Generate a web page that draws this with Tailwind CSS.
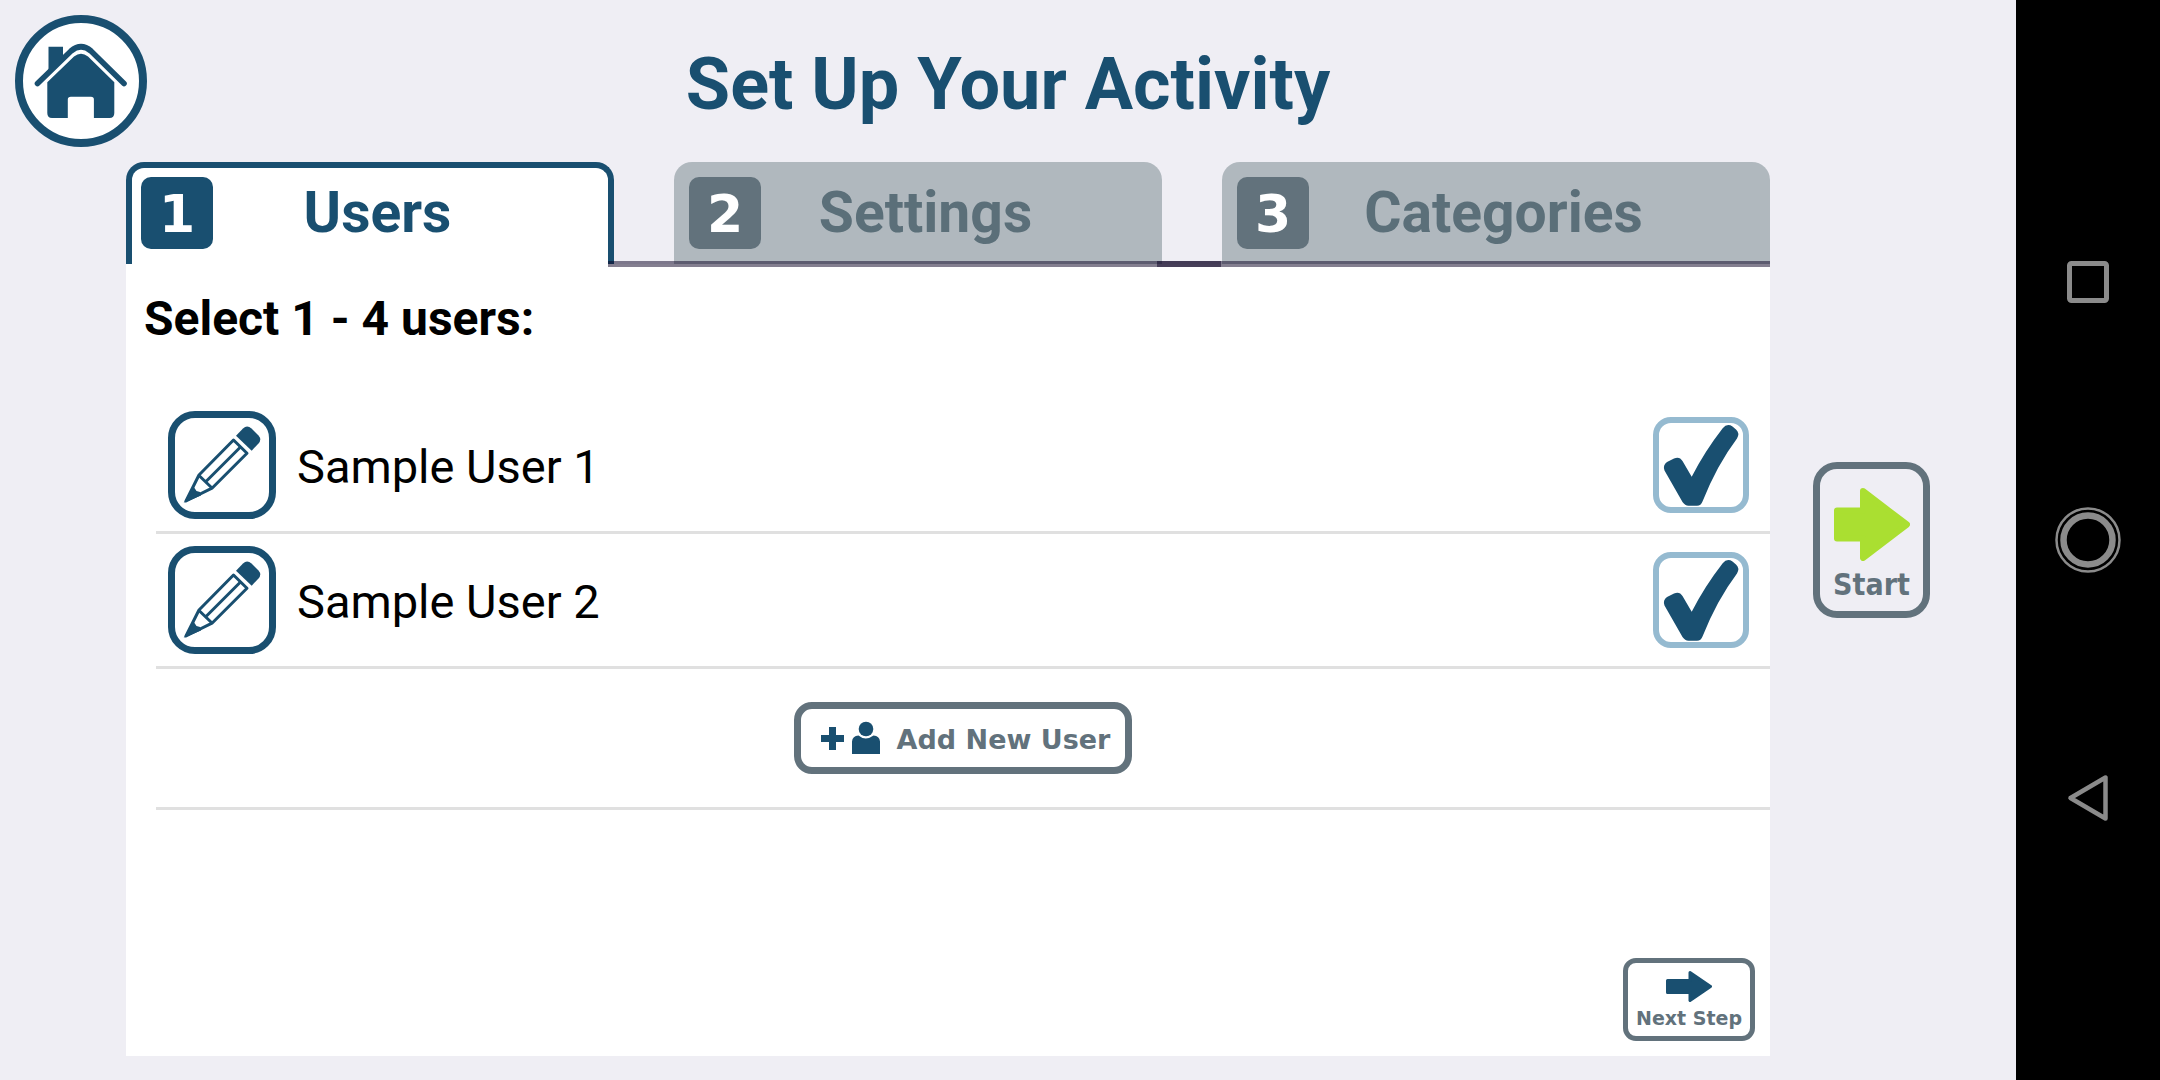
<!DOCTYPE html>
<html lang="en">
<head>
<meta charset="utf-8">
<meta name="viewport" content="width=device-width, initial-scale=1">
<title>Set Up Your Activity</title>
<script src="https://cdn.jsdelivr.net/npm/@tailwindcss/browser@4"></script>
</head>
<body class="flex min-h-screen bg-[#efeef4] font-[Roboto,sans-serif] text-black">

<svg class="hidden" aria-hidden="true">
  <symbol id="pencil" viewBox="0 0 108 108">
    <path fill="#194f70" d="M68 24.7l7-7.3q4-4 8.500 0l7 7q3.500 4 0 8l-6.800 7.300z"/>
    <path fill="none" stroke="#194f70" stroke-width="3" stroke-linejoin="round" d="M65.500 29L79 42.300L44 77.200L18 90L31 64z"/>
    <path fill="none" stroke="#194f70" stroke-width="3" d="M31 64.500L44.500 77.500M72.500 36L38 70.500"/>
    <path fill="#194f70" d="M15.700 91.700L25.500 75.500L28.500 80L32 81l1 3.500z"/>
  </symbol>
  <symbol id="check" viewBox="0 0 96 96">
    <path fill="#194f70" d="M11.500 53.500Q9.500 48 14 45L21 41.500Q26.500 39 29.500 44L38.700 59.700Q52 34 69.700 11.300Q74 6 79.500 9.500L83 12.500Q87 16 84 21.500Q64 48 49.500 84.500Q48 88.700 44 88.700H35.500Q32 88.700 29.500 85z"/>
  </symbol>
  <symbol id="arrow" viewBox="0 0 76 73">
    <path fill="currentColor" stroke="currentColor" stroke-width="6" stroke-linejoin="round" d="M3 22.500H29V3L73 36.500L29 70V50.500H3z"/>
  </symbol>
</svg>

<main class="flex flex-1 flex-col">
  <header class="grid grid-cols-[132px_1fr_132px] items-start px-[15px] pt-[15px]">
    <button aria-label="Home" class="size-[132px]">
      <svg viewBox="0 0 132 132" class="size-full">
        <circle cx="66" cy="66" r="62" fill="#fff" stroke="#194f70" stroke-width="8"/>
        <path fill="#194f70" d="M33.500 31.700H48V43L33.500 57z"/>
        <path fill="none" stroke="#194f70" stroke-width="5.600" stroke-linecap="round" d="M22.500 68.500L56 36Q66 27.500 76 36L109 68.500"/>
        <path fill="#194f70" d="M32.300 67.300L59 41.500Q66 36 73 41.500L99.300 67.300V98Q99.300 103 94.500 103H78.900V84.500Q78.900 81.700 76 81.700H55.800Q52.800 81.700 52.800 84.500V103H37Q32.300 103 32.300 98z"/>
      </svg>
    </button>
    <h1 class="pt-[26px] text-center text-[72px] leading-[88px] font-bold text-[#194f70]">Set Up Your Activity</h1>
  </header>

  <div class="flex flex-1 pt-[15px] pb-6 pl-[126px]">
    <section class="flex flex-1 flex-col">
      <div role="tablist" class="grid grid-cols-[488fr_488fr_548fr] gap-[60px]">
        <button role="tab" aria-selected="true" class="relative flex h-[102px] items-center rounded-t-[18px] border-6 border-b-0 border-[#194f70] bg-white pb-[6px] pl-[9px]">
          <span class="flex size-[72px] items-center justify-center rounded-[10px] bg-[#194f70] pt-[2px] font-['DejaVu_Sans'] text-[52px] leading-none font-bold text-white">1</span>
          <span class="flex-1 pr-[66px] text-center text-[57px] leading-[64px] font-bold text-[#194f70]">Users</span>
          <span class="absolute -bottom-[3px] left-full z-10 h-[6px] w-[calc(100%+137px)] bg-[#0a0022]/50"></span>
        </button>
        <button role="tab" aria-selected="false" class="relative flex h-[102px] items-center rounded-t-[18px] bg-[#b0b8be] pl-[15px]">
          <span class="flex size-[72px] items-center justify-center rounded-[10px] bg-[#62727c] pt-[2px] font-['DejaVu_Sans'] text-[52px] leading-none font-bold text-white">2</span>
          <span class="flex-1 pr-[72px] text-center text-[57px] leading-[64px] font-bold text-[#5b6f79]">Settings</span>
          <span class="absolute -bottom-[3px] left-[calc(100%-5px)] z-10 h-[6px] w-[calc(100%+125px)] bg-[#0a0022]/50"></span>
        </button>
        <button role="tab" aria-selected="false" class="flex h-[102px] items-center rounded-t-[18px] bg-[#b0b8be] pl-[15px]">
          <span class="flex size-[72px] items-center justify-center rounded-[10px] bg-[#62727c] pt-[2px] font-['DejaVu_Sans'] text-[52px] leading-none font-bold text-white">3</span>
          <span class="flex-1 pr-[72px] text-center text-[57px] leading-[64px] font-bold text-[#5b6f79]">Categories</span>
        </button>
      </div>

      <div role="tabpanel" class="flex flex-1 flex-col bg-white pb-[15px]">
        <h2 class="pt-[27px] pb-[52px] pl-[18px] text-[48px] leading-[56px] font-bold">Select 1 - 4 users:</h2>

        <ul class="pl-[30px]">
          <li class="flex h-[135px] items-center border-b-3 border-[#e0e0e0] pr-[21px] pl-3">
            <button aria-label="Edit Sample User 1" class="size-[108px] rounded-[27px] border-[7px] border-[#194f70]"><svg class="-m-[7px] size-[108px]"><use href="#pencil"/></svg></button>
            <label for="user1" class="flex-1 pt-1 pl-[21px] text-[47px] leading-[56px]">Sample User 1</label>
            <span class="relative size-24">
              <input id="user1" type="checkbox" checked class="block size-24 appearance-none rounded-[18px] border-6 border-[#95bad0] bg-white">
              <svg class="pointer-events-none absolute inset-0 size-24"><use href="#check"/></svg>
            </span>
          </li>
          <li class="flex h-[135px] items-center border-b-3 border-[#e0e0e0] pr-[21px] pl-3">
            <button aria-label="Edit Sample User 2" class="size-[108px] rounded-[27px] border-[7px] border-[#194f70]"><svg class="-m-[7px] size-[108px]"><use href="#pencil"/></svg></button>
            <label for="user2" class="flex-1 pt-1 pl-[21px] text-[47px] leading-[56px]">Sample User 2</label>
            <span class="relative size-24">
              <input id="user2" type="checkbox" checked class="block size-24 appearance-none rounded-[18px] border-6 border-[#95bad0] bg-white">
              <svg class="pointer-events-none absolute inset-0 size-24"><use href="#check"/></svg>
            </span>
          </li>
          <li class="flex h-[141px] items-center justify-center border-b-3 border-[#e0e0e0]">
            <button class="flex h-[72px] items-center rounded-[18px] border-[7px] border-[#62727c] pr-[15px] pl-5 font-['DejaVu_Sans'] text-[27px] leading-8 font-bold text-[#62727c]">
              <svg viewBox="0 0 60 34" class="mr-4 h-[34px] w-[60px]" fill="#194f70">
                <path d="M8 6h7v8h8v7h-8v8H8v-8H0v-7h8z"/>
                <circle cx="45" cy="8" r="7.300"/>
                <path d="M31 33V20.500Q31.500 15 37.500 14.500Q44.500 20.500 52.500 14.500Q58.500 15 59 20.500V33z"/>
              </svg>
              <span class="pt-1">Add New User</span>
            </button>
          </li>
        </ul>

        <button class="mt-auto mr-[15px] flex h-[83px] w-[132px] flex-col items-center self-end rounded-[13px] border-[5px] border-[#62727c] pt-2 font-['DejaVu_Sans'] text-[19px] leading-6 font-bold whitespace-nowrap text-[#62727c]">
          <svg viewBox="0 0 46 31" class="mb-1 h-[31px] w-[46px] shrink-0 text-[#194f70]"><path fill="currentColor" stroke="currentColor" stroke-width="3" stroke-linejoin="round" d="M1.500 9.500H24V1.500L44.500 15.500L24 29.500V21.500H1.500z"/></svg>
          Next Step
        </button>
      </div>
    </section>

    <aside class="w-[246px] pt-[300px] pl-[43px]">
      <button class="flex h-[156px] w-[117px] flex-col items-center rounded-[24px] border-[7px] border-[#62727c] pt-[19px] font-['DejaVu_Sans_Condensed','DejaVu_Sans'] text-[30px] leading-9 font-bold text-[#62727c]">
        <svg class="mb-[6px] h-[73px] w-[76px] shrink-0 text-[#aadf31]"><use href="#arrow"/></svg>
        Start
      </button>
    </aside>
  </div>
</main>

<nav aria-label="System navigation" class="flex w-36 flex-col justify-center bg-black text-[#8b8b8b]">
  <button aria-label="Recent apps" class="flex h-[258px] items-center justify-center">
    <svg viewBox="0 0 66 66" class="size-[66px]" fill="none" stroke="currentColor"><rect x="14.500" y="14.500" width="37" height="37" rx="2" stroke-width="5"/></svg>
  </button>
  <button aria-label="Home screen" class="flex h-[258px] items-center justify-center">
    <svg viewBox="0 0 66 66" class="size-[66px]" fill="none" stroke="currentColor"><circle cx="33" cy="33" r="31.500" stroke-width="2.500"/><circle cx="33" cy="33" r="24.500" stroke-width="6.500"/></svg>
  </button>
  <button aria-label="Back" class="flex h-[258px] items-center justify-center">
    <svg viewBox="0 0 66 66" class="size-[66px]" fill="none" stroke="currentColor"><path d="M15.500 33L50.500 12.500V53.500z" stroke-width="4.500" stroke-linejoin="round"/></svg>
  </button>
</nav>
</body>
</html>
